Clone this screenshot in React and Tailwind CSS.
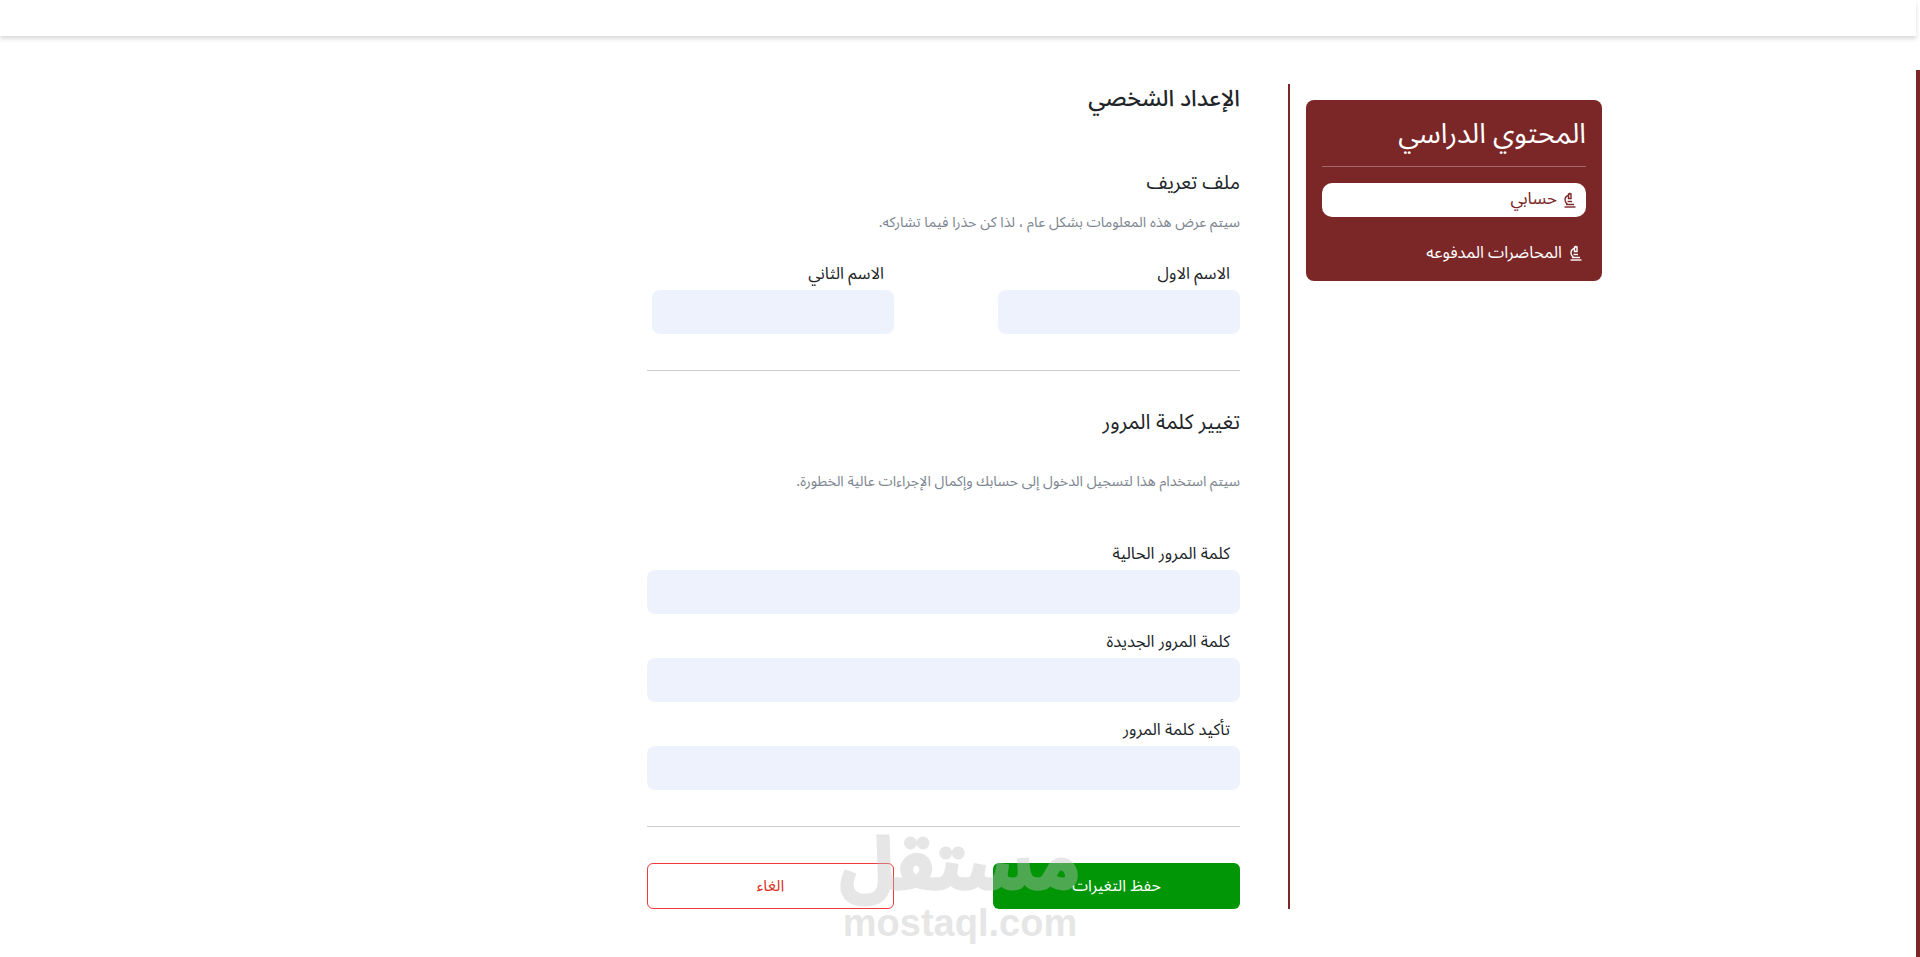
import React from "react";

const font = "font-['Noto_Sans_Arabic','Noto_Sans','DejaVu_Sans',sans-serif]";

function Scope() {
  return (
    <svg width="14" height="16" viewBox="0 0 14 16" fill="none" stroke="currentColor" strokeWidth="1.4" className="shrink-0">
      <path d="M1.5 15h11" />
      <path d="M3 12.5h8" />
      <path d="M4.5 9.5h4.5" />
      <path d="M5.5 2H8v4.5H5.5z" />
      <path d="M6.8 2V.8" />
      <path d="M5.5 3.5c-2.6.6-3.7 2.7-3.4 5 .2 1.6 1.2 3 2.4 4" />
    </svg>
  );
}

function Field({ label, className = "" }) {
  return (
    <div className={`flex flex-col ${className}`}>
      <label className="h-[26px] pr-[10px] text-[16.5px] leading-[19px] text-[#212529]">{label}</label>
      <div className="h-11 rounded-lg bg-[#eef2fc]" />
    </div>
  );
}

export default function App() {
  return (
    <div dir="rtl" className={`relative flex h-[957px] w-full overflow-hidden bg-white ${font}`}>
      <div className="mt-[70px] h-[887px] w-1 shrink-0 bg-[#7b2727]" />
      <div className="flex min-w-0 flex-1 flex-col">
        <header className="h-[36px] shrink-0 bg-white shadow-[0_3px_4px_rgba(0,0,0,0.14)]" />
        <main className="flex flex-1 pr-[314px] pt-[64px]">
          <aside className="h-[181px] w-[296px] shrink-0 rounded-lg bg-[#7b2727] px-4 text-white">
            <h2 className="flex h-[66px] items-center pt-[4px] text-[28px] font-normal">المحتوي الدراسي</h2>
            <div className="h-px bg-white/30" />
            <a className="mt-4 flex h-[34px] items-center gap-[6px] rounded-[10px] bg-white pr-[9px] text-[17px] text-[#7b2727]">
              <Scope />
              حسابي
            </a>
            <a className="mt-[24px] flex items-center gap-[7px] pr-[3px] text-[16.4px] leading-[24px]">
              <Scope />
              المحاضرات المدفوعه
            </a>
          </aside>
          <div className="mr-4 mt-[-16px] h-[825px] w-[2px] shrink-0 bg-[#7b2727]" />
          <section className="mr-12 mt-[-16px] w-[593px] text-[#212529]">
            <h1 className="flex h-[30px] items-center text-[22.7px] font-medium">الإعداد الشخصي</h1>
            <h3 className="mt-[54px] flex h-[30px] items-center text-[19.6px] font-normal">ملف تعريف</h3>
            <p className="mt-[15px] h-[20px] text-[14.3px] leading-[20px] text-[#7d8590]">سيتم عرض هذه المعلومات بشكل عام ، لذا كن حذرا فيما تشاركه.</p>
            <div className="mt-[31px] flex gap-[104px]">
              <Field label="الاسم الاول" className="w-[242px]" />
              <Field label="الاسم الثاني" className="w-[242px]" />
            </div>
            <div className="mt-9 h-px bg-[#cccccc]" />
            <h3 className="mt-[37px] flex h-[30px] items-center text-[21px] font-normal">تغيير كلمة المرور</h3>
            <p className="mt-[34px] h-[20px] text-[14.3px] leading-[20px] text-[#7d8590]">سيتم استخدام هذا لتسجيل الدخول إلى حسابك وإكمال الإجراءات عالية الخطورة.</p>
            <Field label="كلمة المرور الحالية" className="mt-[52px]" />
            <Field label="كلمة المرور الجديدة" className="mt-[18px]" />
            <Field label="تأكيد كلمة المرور" className="mt-[18px]" />
            <div className="mt-9 h-px bg-[#cccccc]" />
            <div className="mt-9 flex justify-between">
              <button className="h-[46px] w-[247px] rounded-md bg-[#009606] text-[16px] text-white">حفظ التغيرات</button>
              <button className="h-[46px] w-[247px] rounded-md border border-[#ee3a3a] bg-white text-[16px] text-[#d9361f]">الغاء</button>
            </div>
          </section>
        </main>
      </div>
      <div className="pointer-events-none absolute left-[844px] top-[824px] flex w-[232px] flex-col items-center text-[#c3c3c3] opacity-40">
        <span className="text-[72px] font-bold leading-[84px] [-webkit-text-stroke:3px_#c3c3c3]">مستقل</span>
        <span dir="ltr" className="font-['Liberation_Sans',sans-serif] text-[38px] font-bold leading-[30px]">mostaql.com</span>
      </div>
    </div>
  );
}
